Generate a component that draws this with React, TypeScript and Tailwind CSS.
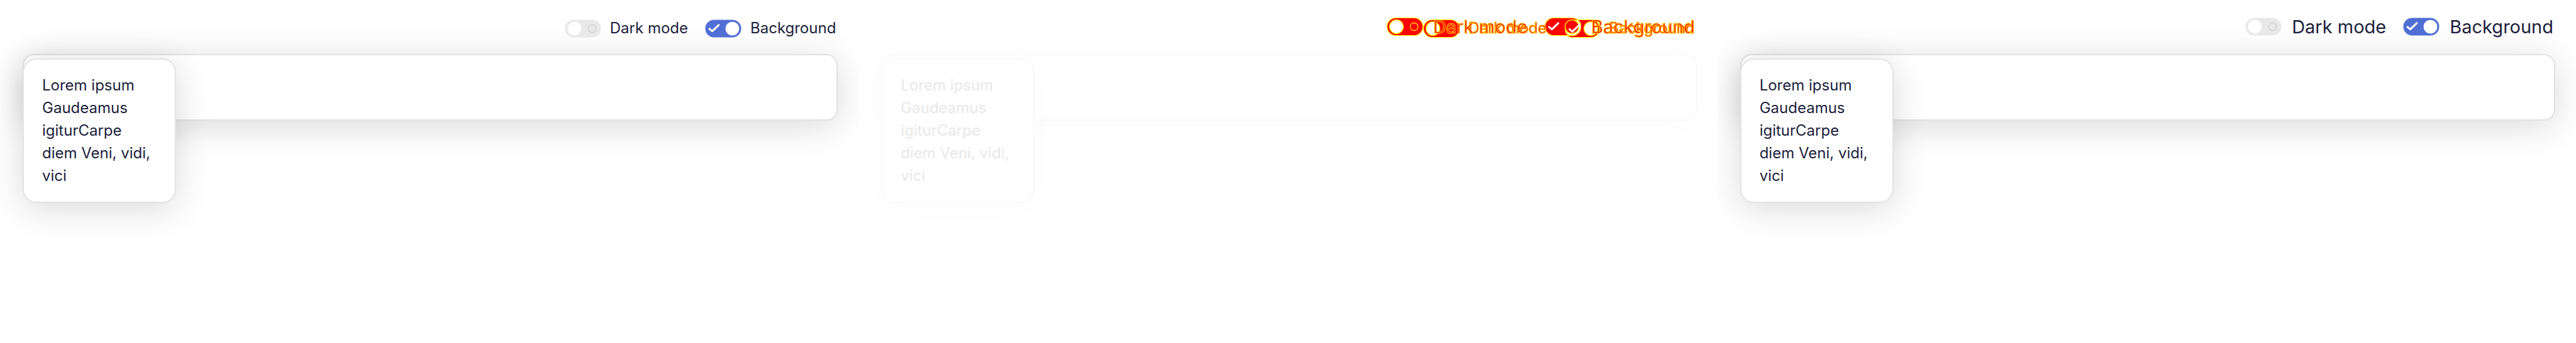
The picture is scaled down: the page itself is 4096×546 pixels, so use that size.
import { useState } from "react";

type Tone = "plain" | "diff";
type Size = "sm" | "lg";

const sizes = {
  sm: { header: "pt-[27px]", row: "h-9 gap-[14px]", text: "text-[24px]" },
  lg: { header: "pt-5", row: "h-11 gap-4", text: "text-[29px]" },
};

const CHECK = "M7.8 16.5 L12.8 20.6 L24 9.8";

interface ToggleProps {
  label: string;
  defaultOn?: boolean;
  size: Size;
  tone: Tone;
}

function Toggle({ label, defaultOn = false, size, tone }: ToggleProps) {
  const [on, setOn] = useState(defaultOn);
  const diff = tone === "diff";
  const track = diff ? "#ff0000" : on ? "#506ed4" : "#e9e9e9";
  const edge = diff ? "#ffff00" : "none";
  // The large switch lies over the small one, so its knob shows the small one's tick.
  const crossed = diff && on && size === "lg";
  return (
    <label className={`flex items-center whitespace-nowrap leading-none ${sizes[size].row} ${sizes[size].text}`}>
      <input type="checkbox" className="sr-only" checked={on} onChange={(e) => setOn(e.target.checked)} />
      <svg viewBox="0 0 64 32" className="h-[29px] w-[58px] shrink-0" aria-hidden="true">
        <rect x="0.5" y="0.5" width="63" height="31" rx="15.5" fill={track} stroke={edge} strokeWidth="1.4" />
        {crossed && (
          <path d="M61.1 6.9 A16 16 0 0 1 38.9 29.1 A16 16 0 0 1 61.1 6.9Z" fill="#eeeeee" stroke="#ffff00" strokeWidth="1.2" />
        )}
        <circle cx={on ? 48 : 17} cy="16" r="12" fill={crossed ? "#ff0000" : "#fff"} stroke={edge} strokeWidth="1.4" />
        {crossed && (
          <path d={CHECK} transform="translate(36 4)" fill="none" stroke="#fff" strokeWidth="3.4" strokeLinecap="round" strokeLinejoin="round" />
        )}
        {on ? (
          <path d={CHECK} fill="none" stroke="#fff" strokeWidth="3.4" strokeLinecap="round" strokeLinejoin="round" />
        ) : (
          <circle cx="48" cy="16" r="6.8" fill="none" stroke={diff ? "#ffff00" : "#cacaca"} strokeWidth="1.2" />
        )}
      </svg>
      <span className={diff ? "relative z-10 text-[#ff0000] [-webkit-text-stroke:1px_#ffc400]" : ""}>{label}</span>
    </label>
  );
}

function Header({ size, tone = "plain" }: { size: Size; tone?: Tone }) {
  return (
    <header className={`flex justify-end gap-[27px] pr-9 ${sizes[size].header}`}>
      <Toggle label="Dark mode" size={size} tone={tone} />
      <Toggle label="Background" defaultOn size={size} tone={tone} />
    </header>
  );
}

function Stage({ faded = false }: { faded?: boolean }) {
  const box = faded
    ? "border-[#fafafa] shadow-[0_9px_55px_rgba(0,0,0,0.015)]"
    : "border-[#e3e3e3] shadow-[0_9px_55px_rgba(0,0,0,0.15)]";
  return (
    <div className={`relative ml-9 mr-[33px] h-[106px] rounded-[18px] border-2 bg-white ${box}`}>
      <div
        className={`absolute -left-0.5 top-[5px] w-61 rounded-[22px] border-2 bg-white px-[29px] py-[23px] text-[24px] leading-9 ${box} ${faded ? "text-[#e8e8e8]" : ""}`}
      >
        Lorem ipsum Gaudeamus igiturCarpe diem Veni, vidi, vici
      </div>
    </div>
  );
}

function Panel({ size }: { size: Size }) {
  return (
    <section className="overflow-hidden">
      <div className="relative z-10 h-[86px]">
        <Header size={size} />
      </div>
      <Stage />
    </section>
  );
}

export default function App() {
  return (
    <main className="grid min-h-screen grid-cols-3 bg-white font-['Inter','Liberation_Sans',sans-serif] text-[#1c1f3d]">
      <Panel size="sm" />
      <section className="overflow-hidden">
        <div className="relative z-10 h-[86px]">
          <Header size="sm" tone="diff" />
          <div className="absolute inset-x-0 top-0">
            <Header size="lg" tone="diff" />
          </div>
        </div>
        <Stage faded />
      </section>
      <Panel size="lg" />
    </main>
  );
}
